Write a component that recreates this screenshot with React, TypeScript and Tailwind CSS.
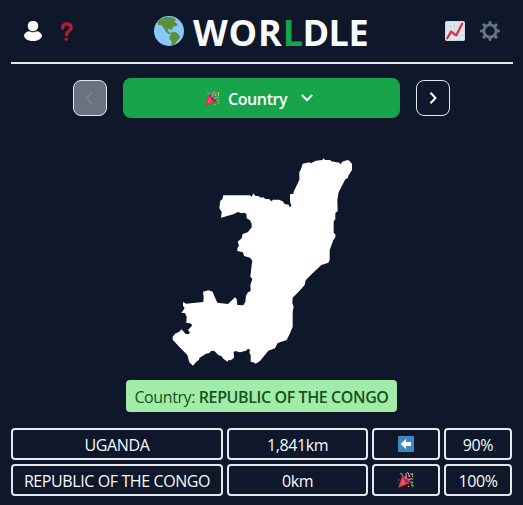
import type { ReactNode } from "react";

function Globe() {
  return (
    <svg viewBox="0 0 90 90" className="h-[30px] w-[30px] shrink-0">
      <circle cx="45" cy="45" r="45" fill="#88c9f9" />
      <path
        fill="#5c913b"
        d="M12 17 22 8 36 3 48 3 61 7 67 13 60 16 64 19 69 23 71 28 66 31 59 31 55 37 52 44 48 40 43 39 41 44 45 48 50 51 57 47 67 49 72 55 78 59 76 67 70 74 64 82 57 88 52 87 53 77 47 70 47 61 51 55 44 54 36 48 30 38 26 31 21 28 13 27 11 23Z"
      />
    </svg>
  );
}

function Popper({ className }: { className: string }) {
  return (
    <svg viewBox="0 0 36 36" className={className}>
      <path fill="#dd2e44" d="M9 9 1 33Q0 36 3 35L28 25Q28 19 20 12 12 6 9 9Z" />
      <path fill="#ea596e" d="M11 13 5 31 16 26Z" />
      <path fill="#a0041e" d="M10 9Q16 16 20 19T28 24Q26 26 20 22 12 15 10 9Z" />
      <path fill="none" stroke="#aa8dd8" strokeWidth="3" strokeLinecap="round" d="M17 14Q20 10 18 4M23 18Q27 14 33 16" />
      <path fill="none" stroke="#77b255" strokeWidth="2.5" strokeLinecap="round" d="M5 4Q11 2 9 8M28 23Q35 20 32 26T35 31" />
      <path fill="none" stroke="#aa8dd8" strokeWidth="2.5" d="M20 1Q26 2 23 8" />
      <g fill="#ffcc4d">
        <circle cx="25.5" cy="9.5" r="2" />
        <circle cx="32" cy="5" r="2.2" />
        <circle cx="32.5" cy="10" r="1.5" />
        <circle cx="23.5" cy="32.5" r="1.5" />
      </g>
      <g fill="#5c913b">
        <circle cx="2" cy="18" r="1.8" />
        <circle cx="28" cy="4" r="1.5" />
        <circle cx="32" cy="33" r="1.7" />
      </g>
    </svg>
  );
}

function Person() {
  return (
    <svg viewBox="0 0 54 60" className="h-5 w-[18px]" fill="#fff">
      <ellipse cx="27" cy="15" rx="16" ry="15.5" />
      <path d="M9 32Q16 29 20 32 27 35 34 32 39 29 45 32 54 38 54 44C52 54 40 60 27 60S2 54 0 44Q0 38 9 32Z" />
    </svg>
  );
}

function Question() {
  return (
    <svg viewBox="0 0 36 56" className="ml-[19px] h-[19px] w-3">
      <path d="M5.5 18C4 9 10 5.500 18 5.500s12.500 5 12.500 11.500c0 11-14 9-14 20v1" fill="none" stroke="#be1931" strokeWidth="10" strokeLinecap="round" />
      <circle cx="16" cy="51" r="5" fill="#be1931" />
    </svg>
  );
}

function Chart() {
  return (
    <svg viewBox="0 0 36 36" className="h-5 w-5">
      <rect width="36" height="36" rx="3" fill="#ccd6dd" />
      <rect x="2" y="2" width="32" height="32" rx="1" fill="#e1e8ed" />
      <path d="M9 2v32M17 2v32M25 2v32M2 10h32M2 18h32M2 26h32" stroke="#ccd6dd" strokeWidth="1.5" />
      <path d="M4 31 11 19 20 26 31 5" fill="none" stroke="#dd2e44" strokeWidth="4" strokeLinecap="round" strokeLinejoin="round" />
    </svg>
  );
}

function Gear() {
  return (
    <svg viewBox="-18 -18 36 36" className="ml-[15px] h-5 w-5">
      <circle r="11" fill="none" stroke="#66757f" strokeWidth="5" />
      <g stroke="#66757f" strokeWidth="5.500" strokeLinecap="round">
        <path d="M0-13v-2.300M0 13v2.300M-13 0h-2.300M13 0h2.300M-9-9l-2-2M9-9l2-2M-9 9l-2 2M9 9l2 2" />
      </g>
    </svg>
  );
}

function LeftArrow() {
  return (
    <svg viewBox="0 0 48 48" className="h-4 w-4">
      <rect width="48" height="48" rx="4" fill="#3b88c3" />
      <path d="M8 24 24 9v9h15v12H24v9Z" fill="#fff" />
    </svg>
  );
}

function CountryShape() {
  return (
    <svg viewBox="0 0 600 660" className="mt-8 ml-[160px] block h-[220px] w-[200px]" fill="#fff">
      <path d="M190 136 270 136 274 141 281 130 285 137 296 139 305 144 308 141 317 147 327 147 334 154 340 149 357 149 368 154 374 162 386 164 389 172 394 167 390 155 390 133 400 131 402 123 418 90 418 65 422 60 428 41 448 37 452 40 468 32 487 30 491 25 495 30 510 30 514 34 538 38 541 43 547 35 560 31 566 31 576 41 576 60 565 77 564 84 556 88 536 127 532 150 533 183 526 190 526 208 521 214 521 248 527 255 525 264 520 270 509 300 509 330 505 338 484 345 465 363 450 377 437 391 434 405 418 423 398 443 397 460 401 470 398 485 398 530 390 550 380 570 353 579 345 595 325 602 300 633 287 641 280 637 272 636 272 615 268 608 270 599 264 596 258 602 240 607 225 603 221 607 222 623 212 631 205 630 203 635 195 630 190 626 185 619 175 615 163 603 154 602 148 609 138 611 118 624 117 629 109 635 99 647 88 637 82 615 73 606 62 595 38 569 38 561 45 551 58 545 64 538 72 546 76 551 85 553 90 548 84 540 97 526 90 520 79 519 80 500 75 489 64 489 70 480 74 475 69 467 69 456 78 461 100 459 130 456 131 440 129 425 145 421 158 425 164 440 170 454 172 458 204 462 225 442 230 447 232 465 250 466 256 455 258 437 264 427 272 423 271 405 277 387 271 380 275 345 277 332 270 323 252 318 250 310 247 306 232 303 232 294 237 287 233 275 245 265 248 252 255 250 264 246 275 232 275 222 270 211 260 205 259 191 252 188 243 190 235 186 227 189 220 193 183 203 185 185 178 175 181 152 187 148Z" />
    </svg>
  );
}

function Cell({ children }: { children: ReactNode }) {
  return (
    <div className="flex h-8 items-center justify-center rounded-[4px] border-2 border-gray-200 tracking-[-0.4px] whitespace-nowrap">
      {children}
    </div>
  );
}

function Label({ children }: { children: ReactNode }) {
  return <span className="pt-[2px]">{children}</span>;
}

export default function App() {
  return (
    <div className="h-[505px] w-[523px] overflow-hidden bg-[#0f172a] font-['Open_Sans','Noto_Sans',sans-serif] text-base text-slate-50">
      <header className="mr-[10px] ml-[11px] flex h-16 items-center border-b-2 border-gray-200 pr-[13px] pl-[13px]">
        <Person />
        <Question />
        <div className="ml-[81px] flex items-center">
          <Globe />
          <h1 className="ml-[9px] w-[252px] pt-1 text-[36px] leading-none font-bold tracking-[-0.5px]">
            <span className="tracking-[0.8px]">WOR</span>
            <span className="text-[#18a44b]">L</span>DLE
          </h1>
        </div>
        <div className="ml-auto flex items-center">
          <Chart />
          <Gear />
        </div>
      </header>

      <nav className="mt-[14px] flex h-10 items-center justify-center gap-4">
        <button className="flex h-9 w-[34px] items-center justify-center rounded-lg border border-gray-200 bg-gray-500">
          <svg viewBox="0 0 24 24" className="h-4 w-4" fill="none" stroke="#7f8186" strokeWidth="3">
            <path d="m15 4-8 8 8 8" />
          </svg>
        </button>
        <button className="flex h-10 w-[277px] items-center rounded-lg bg-[#18a44b] pl-[82px] font-semibold text-white">
          <Popper className="h-[15px] w-[15px]" />
          <span className="ml-2 w-[60px] pt-[2px] text-left tracking-[-0.4px]">Country</span>
          <svg viewBox="0 0 12 12" className="ml-[13px] h-3 w-3" fill="none" stroke="#fff" strokeWidth="2">
            <path d="m.8 3 5.2 5.2L11.2 3" />
          </svg>
        </button>
        <button className="flex h-9 w-[34px] items-center justify-center rounded-lg border border-gray-200">
          <svg viewBox="0 0 16 16" className="h-4 w-4" fill="none" stroke="#fff" strokeWidth="2">
            <path d="m5.5 2.8 5 5.2-5 5.2" />
          </svg>
        </button>
      </nav>

      <CountryShape />

      <div className="mt-[10px] ml-[126px] flex h-8 w-[271px] items-center justify-center rounded-[4px] bg-[#a0eca8] pt-[2px] tracking-[-0.4px] whitespace-pre text-[#14531d]">
        <span>Country: </span>
        <span className="font-semibold">REPUBLIC OF THE CONGO</span>
      </div>

      <div className="mt-4 ml-[11px] grid grid-cols-[212px_141px_68px_68px] gap-1">
        <Cell><Label>UGANDA</Label></Cell>
        <Cell><Label>1,841km</Label></Cell>
        <Cell><LeftArrow /></Cell>
        <Cell><Label>90%</Label></Cell>
        <Cell><Label>REPUBLIC OF THE CONGO</Label></Cell>
        <Cell><Label>0km</Label></Cell>
        <Cell><Popper className="h-4 w-4" /></Cell>
        <Cell><Label>100%</Label></Cell>
      </div>
    </div>
  );
}
